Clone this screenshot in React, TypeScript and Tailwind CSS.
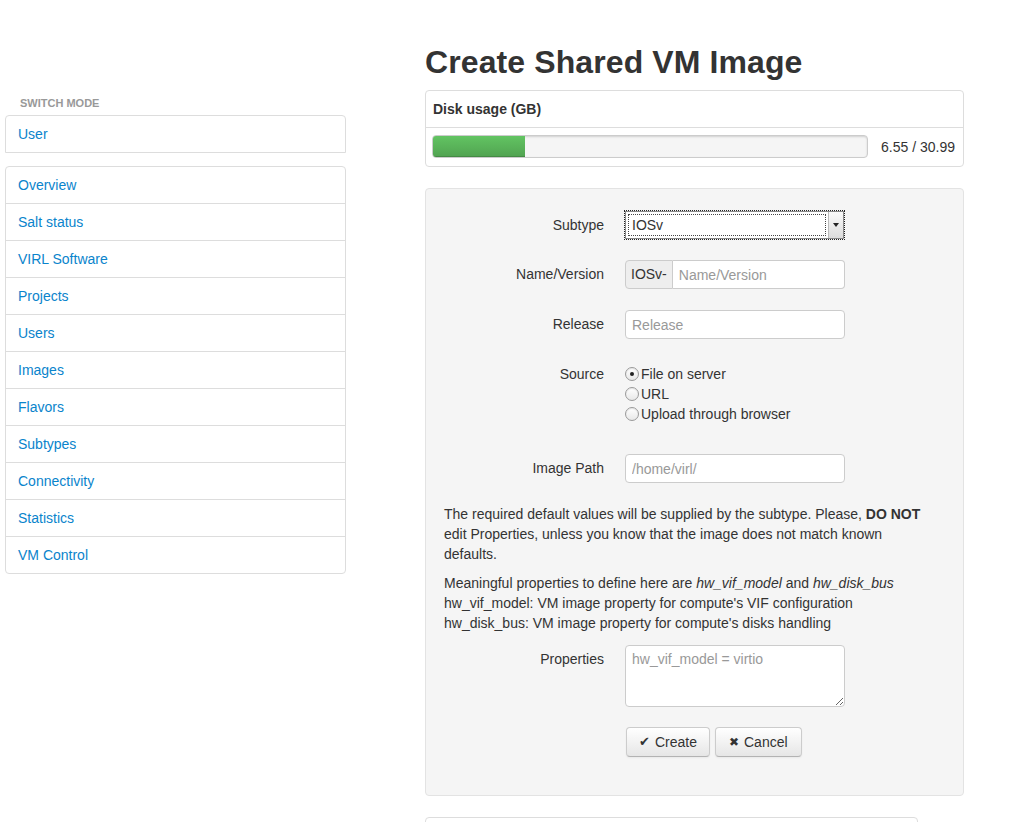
import React from 'react'

const adminLinks = [
  'Overview',
  'Salt status',
  'VIRL Software',
  'Projects',
  'Users',
  'Images',
  'Flavors',
  'Subtypes',
  'Connectivity',
  'Statistics',
  'VM Control',
]

function FormRow({ label, children, className = '' }: { label: string; children: React.ReactNode; className?: string }) {
  return (
    <div className={`flex ${className}`}>
      <label className="w-[160px] shrink-0 text-right pr-[1px] leading-[28px]">{label}</label>
      <div className="ml-[20px]">{children}</div>
    </div>
  )
}

function Radio({ checked, label }: { checked?: boolean; label: string }) {
  return (
    <label className="flex items-center h-[20px]">
      <span className="w-[14px] h-[14px] rounded-full border border-[#9a9a9a] bg-gradient-to-b from-white to-[#e8e8e8] shadow-[inset_0_1px_1px_rgba(0,0,0,0.1)] flex items-center justify-center">
        {checked && <span className="w-[4px] h-[4px] rounded-full bg-[#222]" />}
      </span>
      <span className="ml-[2px]">{label}</span>
    </label>
  )
}

export default function App() {
  return (
    <div className="min-h-[822px] bg-white text-[#333] text-[14px] leading-[20px] font-['Liberation_Sans',Arial,sans-serif] flex pl-[5px]">
      {/* Sidebar */}
      <div className="w-[341px] shrink-0 pt-[95px]">
        <div className="pl-[15px] text-[11px] leading-[16px] font-bold uppercase text-[#999]">Switch mode</div>
        <div className="mt-[4px] border border-[#ddd] rounded-t-[4px]">
          <a className="block px-[12px] py-[8px] text-[#0a84cc]">User</a>
        </div>
        <ul className="mt-[13px] border border-[#ddd] rounded-[4px]">
          {adminLinks.map((name, i) => (
            <li key={name} className={i > 0 ? 'border-t border-[#ddd]' : ''}>
              <a className="block px-[12px] py-[8px] text-[#0a84cc]">{name}</a>
            </li>
          ))}
        </ul>
      </div>

      {/* Main */}
      <div className="ml-[79px] w-[539px] pt-[42px]">
        <h1 className="text-[32px] leading-[40px] font-bold text-[#333] tracking-[0.1px]">Create Shared VM Image</h1>

        <div className="mt-[8px] border border-[#ddd] rounded-[4px]">
          <div className="px-[7px] py-[8px] font-bold border-b border-[#ddd]">Disk usage (GB)</div>
          <div className="flex items-center px-[6px] pt-[7px] pb-[8px]">
            <div className="w-[436px] h-[23px] rounded-[4px] bg-[#f5f5f5] border border-[#ccc] shadow-[inset_0_1px_2px_rgba(0,0,0,0.15)] overflow-hidden">
              <div
                className="h-full bg-gradient-to-b from-[#62c462] to-[#51a351] shadow-[inset_0_-1px_0_rgba(0,0,0,0.15)]"
                style={{ width: `${(6.55 / 30.99) * 100}%` }}
              />
            </div>
            <span className="ml-[13px]">6.55 / 30.99</span>
          </div>
        </div>

        {/* Form well */}
        <div className="mt-[21px] h-[608px] bg-[#f5f5f5] border border-[#e3e3e3] rounded-[4px] pt-[22px] pl-[18px] pr-[19px]">
          <div className="pl-[1px]">
            <FormRow label="Subtype">
              <div className="w-[219px] h-[28px] flex outline-1 outline-dotted outline-[#222] border border-[#888] bg-white">
                <div className="flex-1 m-[2px] border border-dotted border-[#444] pl-[3px] leading-[20px]">IOSv</div>
                <div className="w-[15px] bg-gradient-to-b from-[#fafafa] to-[#dcdcdc] border-l border-[#bbb] flex items-center justify-center">
                  <span className="w-0 h-0 border-l-[3px] border-r-[3px] border-t-[4px] border-l-transparent border-r-transparent border-t-[#222]" />
                </div>
              </div>
            </FormRow>

            <FormRow label="Name/Version" className="mt-[21px]">
              <div className="flex w-[220px] h-[29px]">
                <span className="px-[5px] leading-[27px] bg-[#eee] border border-[#ccc] rounded-l-[4px]">IOSv-</span>
                <input
                  className="flex-1 min-w-0 px-[6px] bg-white border border-l-0 border-[#ccc] rounded-r-[4px] placeholder:text-[#999] outline-none"
                  placeholder="Name/Version"
                />
              </div>
            </FormRow>

            <FormRow label="Release" className="mt-[21px]">
              <input
                className="w-[220px] h-[29px] px-[6px] bg-white border border-[#ccc] rounded-[4px] placeholder:text-[#999] outline-none"
                placeholder="Release"
              />
            </FormRow>

            <FormRow label="Source" className="mt-[21px]">
              <div className="pt-[4px]">
                <Radio checked label="File on server" />
                <Radio label="URL" />
                <Radio label="Upload through browser" />
              </div>
            </FormRow>

            <FormRow label="Image Path" className="mt-[30px]">
              <input
                className="w-[220px] h-[29px] px-[6px] bg-white border border-[#ccc] rounded-[4px] placeholder:text-[#999] outline-none"
                placeholder="/home/virl/"
              />
            </FormRow>
          </div>

          <p className="mt-[21px] w-[490px]">
            The required default values will be supplied by the subtype. Please, <b>DO NOT</b> edit Properties,
            unless you know that the image does not match known defaults.
          </p>
          <p className="mt-[9px]">
            Meaningful properties to define here are <i>hw_vif_model</i> and <i>hw_disk_bus</i>
            <br />
            hw_vif_model: VM image property for compute's VIF configuration
            <br />
            hw_disk_bus: VM image property for compute's disks handling
          </p>

          <div className="pl-[1px]">
            <FormRow label="Properties" className="mt-[12px]">
              <textarea
                className="block w-[220px] h-[62px] px-[6px] py-[3px] bg-white border border-[#ccc] rounded-[4px] placeholder:text-[#999] outline-none resize-y"
                placeholder="hw_vif_model = virtio"
              />
            </FormRow>

            <div className="flex ml-[181px] mt-[20px] gap-[5px]">
              <button className="h-[30px] px-[12px] rounded-[4px] border border-[#ccc] border-b-[#b3b3b3] bg-gradient-to-b from-white to-[#e6e6e6] shadow-[inset_0_1px_0_rgba(255,255,255,0.2),0_1px_2px_rgba(0,0,0,0.05)] flex items-center text-[#333]">
                <span className="font-['DejaVu_Sans',sans-serif] font-bold text-[13px] mr-[5px]">✔</span>Create
              </button>
              <button className="h-[30px] px-[13px] rounded-[4px] border border-[#ccc] border-b-[#b3b3b3] bg-gradient-to-b from-white to-[#e6e6e6] shadow-[inset_0_1px_0_rgba(255,255,255,0.2),0_1px_2px_rgba(0,0,0,0.05)] flex items-center text-[#333]">
                <span className="font-['DejaVu_Sans',sans-serif] text-[12px] mr-[5px]">✖</span>Cancel
              </button>
            </div>
          </div>
        </div>

        <div className="mt-[21px] w-[493px] h-[20px] border border-[#ddd] rounded-t-[4px] bg-white" />
      </div>
    </div>
  )
}
